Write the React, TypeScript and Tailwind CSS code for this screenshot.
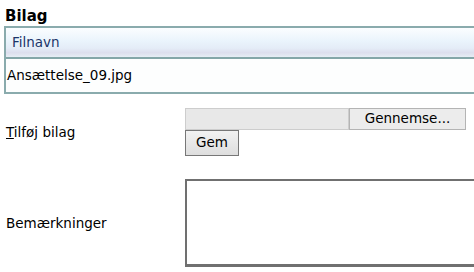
const font = { fontFamily: '"DejaVu Sans", Verdana, sans-serif' };

const App = () => {
  return (
    <div className="w-[474px] h-[272px] overflow-hidden bg-white text-black" style={font}>
      <h2 className="pl-[5px] pt-[6px] text-[15px] font-bold leading-[20px]">Bilag</h2>

      <div className="ml-[4px] w-[480px] border-2 border-[#8aabad]">
        <div className="h-[31px] flex items-center pl-[6px] text-[13.5px] text-[#1c3569] bg-[linear-gradient(to_bottom,#fbfdff_0%,#eaf4fc_45%,#e4ecf7_70%,#dcdeed_85%,#e6edf4_100%)] border-b-2 border-[#84a6a8]">
          Filnavn
        </div>
        <div className="h-[33px] flex items-center pl-[1px] text-[13.5px] bg-[#fdfefe]">Ansættelse_09.jpg</div>
      </div>

      <form className="mt-[14px] flex flex-col">
        <div className="flex items-center">
          <label className="w-[185px] shrink-0 pl-[6px] text-[13.5px]">
            <span className="underline">T</span>ilføj bilag
          </label>
          <div className="flex flex-col items-start shrink-0">
            <div className="flex">
              <div className="w-[164px] h-[22px] bg-[#e8e8e8] border border-[#cdcdcd]" />
              <button
                type="button"
                className="w-[117px] h-[22px] bg-[#ececec] border border-[#b4b4b4] text-[13.5px] leading-none"
              >
                Gennemse...
              </button>
            </div>
            <button
              type="button"
              className="w-[54px] h-[26px] bg-[linear-gradient(to_bottom,#f2f2f2,#dedede)] border border-[#777] text-[13.5px] leading-none"
            >
              Gem
            </button>
          </div>
        </div>

        <div className="mt-[23px] flex items-center">
          <label className="w-[185px] shrink-0 pl-[6px] text-[13.5px]">Bemærkninger</label>
          <textarea className="w-[300px] h-[88px] shrink-0 border-2 border-[#707070] border-b-[3px] resize-none bg-white" />
        </div>
      </form>
    </div>
  );
};

export default App;
